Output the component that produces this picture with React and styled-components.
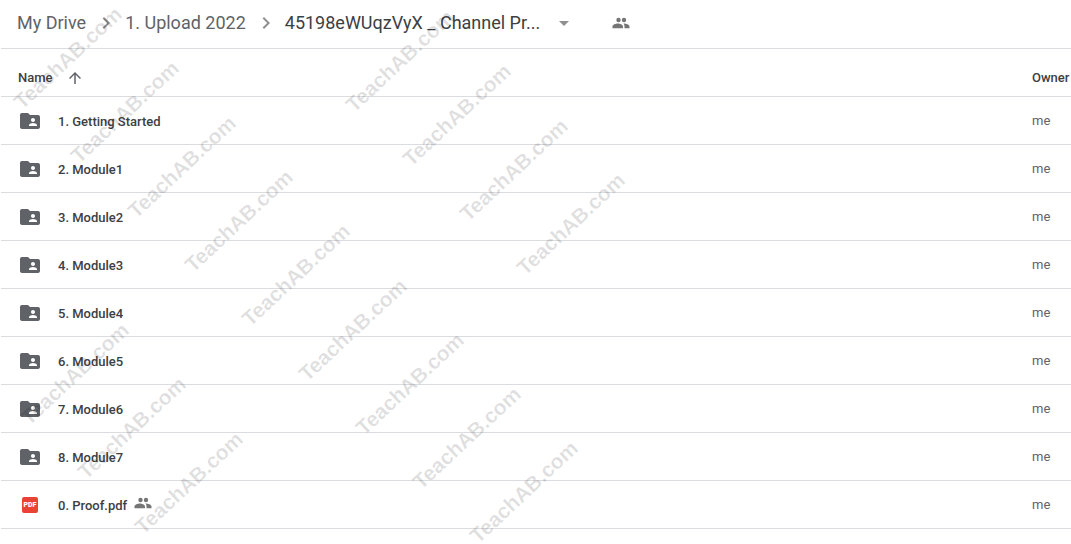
import React from 'react'
import styled, { createGlobalStyle } from 'styled-components'

const GlobalStyle = createGlobalStyle`
    body {
        margin: 0;
        background-color: white;
        font-family: Roboto, "Liberation Sans", sans-serif;
        color: #3c4043;
    }
`
const Container = styled.div`
    position: relative;
    min-height: 100vh;
    overflow: hidden;
`
const Content = styled.main`
    padding-left: 1px;
`
const Breadcrumbs = styled.nav`
    display: flex;
    align-items: center;
    height: 46px;
    padding: 0 16px 2px;
    border-bottom: 1px solid #dadce0;
    font-size: 18px;
    line-height: 24px;
    white-space: nowrap;
`
const Crumb = styled.a`
    color: #5f6368;
    text-decoration: none;
`
const CrumbButton = styled.button`
    display: flex;
    align-items: center;
    gap: 12px;
    padding: 0;
    border: 0;
    background: none;
    font: inherit;
    color: #3c4043;
`
const ShareButton = styled.button`
    display: flex;
    margin-left: 36px;
    padding: 0;
    border: 0;
    background: none;
`
const Icon = styled.svg`
    flex: none;
    display: block;
    width: ${({ $size }) => $size}px;
    height: ${({ $size }) => $size}px;
    fill: ${({ $color }) => $color || '#5f6368'};
`
const Separator = styled(Icon)`
    margin: 0 7px 0 8px;
`
const FileTable = styled.table`
    width: 100%;
    table-layout: fixed;
    border-collapse: separate;
    border-spacing: 0;
    font-size: 13px;
    line-height: 20px;
`
const HeadCell = styled.th`
    box-sizing: border-box;
    width: ${({ $width }) => $width || 'auto'};
    height: 48px;
    padding: 10px 0 0 ${({ $inset }) => $inset || '0'};
    border-bottom: 1px solid #dadce0;
    font-weight: 500;
    text-align: left;
`
const Cell = styled.td`
    box-sizing: border-box;
    height: 48px;
    padding: 0 0 0 ${({ $inset }) => $inset || '0'};
    border-bottom: 1px solid #dadce0;
    color: ${({ $muted }) => ($muted ? '#5f6368' : '#3c4043')};
    font-weight: ${({ $muted }) => ($muted ? 400 : 500)};
`
const SortButton = styled.button`
    display: flex;
    align-items: center;
    gap: 13px;
    padding: 0;
    border: 0;
    background: none;
    font: inherit;
    color: inherit;
`
const FileName = styled.div`
    display: flex;
    align-items: center;
    gap: 16px;
`
const Label = styled.span`
    display: flex;
    align-items: flex-start;
    gap: 7px;
    padding-top: 2px;
    line-height: 24px;
`
const PdfBadge = styled.span`
    flex: none;
    width: 16px;
    margin: 0 4px;
    border-radius: 2px;
    background-color: #ea4335;
    color: white;
    font-size: 7px;
    line-height: 16px;
    font-weight: 900;
    text-align: center;
`
const WatermarkLayer = styled.div`
    position: absolute;
    inset: 0;
    overflow: hidden;
    pointer-events: none;
`
const Watermark = styled.span`
    position: absolute;
    left: ${({ $x }) => $x}px;
    top: ${({ $y }) => $y}px;
    transform: translate(-50%, -50%) rotate(-43deg);
    font-family: "Liberation Sans", Arial, sans-serif;
    font-size: 21px;
    line-height: 20px;
    font-weight: 700;
    color: rgba(0, 0, 0, 0.12);
`

const PeopleIcon = () => (
    <Icon $size={18} viewBox="0 0 18 18" $color="#757575">
        <circle cx="6.5" cy="6" r="2.2" />
        <circle cx="12" cy="6" r="2.2" />
        <path d="M.5 14.2v-1.6c0-2 3.3-3 5.3-3s5.2 1 5.2 3v1.6z" />
        <path d="M11.5 9.6c2.5.1 6 1 6 3v1.6h-5v-1.6c0-1.2-.3-2.2-1-3z" />
    </Icon>
)

const FolderIcon = () => (
    <Icon $size={24} viewBox="0 0 24 24">
        <path d="M20 6h-8l-2-2H4c-1.1 0-1.99.9-1.99 2L2 18c0 1.1.9 2 2 2h16c1.1 0 2-.9 2-2V8c0-1.1-.9-2-2-2zm-5 3c1.1 0 2 .9 2 2s-.9 2-2 2-2-.9-2-2 .9-2 2-2zm4 8h-8v-1c0-1.33 2.67-2 4-2s4 .67 4 2v1z" />
    </Icon>
)

const PdfIcon = () => <PdfBadge>PDF</PdfBadge>

const Chevron = () => (
    <Separator $size={24} viewBox="0 0 24 24" $color="#909090">
        <path d="M10 6L8.59 7.41 13.17 12l-4.58 4.59L10 18l6-6z" />
    </Separator>
)

const files = [
    { name: '1. Getting Started' },
    { name: '2. Module1' },
    { name: '3. Module2' },
    { name: '4. Module3' },
    { name: '5. Module4' },
    { name: '6. Module5' },
    { name: '7. Module6' },
    { name: '8. Module7' },
    { name: '0. Proof.pdf', pdf: true, shared: true },
]

// each run goes down to the right from its first mark
const runs = [
    { x: 68, y: 58, count: 9 },
    { x: 400, y: 61, count: 4 },
    { x: 75, y: 374, count: 3 },
]
const marks = runs.flatMap(({ x, y, count }) =>
    Array.from({ length: count }, (_, i) => ({
        x: x + i * 57,
        y: y + Math.round(i * 54.3),
    }))
)

export default function App() {
    return (
        <Container>
            <GlobalStyle />
            <Content>
                <Breadcrumbs>
                    <Crumb href="#">My Drive</Crumb>
                    <Chevron />
                    <Crumb href="#">1. Upload 2022</Crumb>
                    <Chevron />
                    <CrumbButton>
                        45198eWUqzVyX _ Channel Pr...
                        <Icon $size={24} viewBox="0 0 24 24" $color="#909090">
                            <path d="M7 10l5 5 5-5z" />
                        </Icon>
                    </CrumbButton>
                    <ShareButton aria-label="Manage people">
                        <PeopleIcon />
                    </ShareButton>
                </Breadcrumbs>
                <FileTable>
                    <thead>
                        <tr>
                            <HeadCell $inset="17px">
                                <SortButton>
                                    Name
                                    <Icon $size={18} viewBox="0 0 24 24">
                                        <path d="M4 12l1.41 1.41L11 7.83V20h2V7.83l5.58 5.59L20 12l-8-8-8 8z" />
                                    </Icon>
                                </SortButton>
                            </HeadCell>
                            <HeadCell $width="39px">Owner</HeadCell>
                        </tr>
                    </thead>
                    <tbody>
                        {files.map((file) => (
                            <tr key={file.name}>
                                <Cell $inset="17px">
                                    <FileName>
                                        {file.pdf ? <PdfIcon /> : <FolderIcon />}
                                        <Label>
                                            {file.name}
                                            {file.shared && <PeopleIcon />}
                                        </Label>
                                    </FileName>
                                </Cell>
                                <Cell $muted>me</Cell>
                            </tr>
                        ))}
                    </tbody>
                </FileTable>
            </Content>
            <WatermarkLayer aria-hidden="true">
                {marks.map(({ x, y }) => (
                    <Watermark key={`${x}-${y}`} $x={x} $y={y}>TeachAB.com</Watermark>
                ))}
            </WatermarkLayer>
        </Container>
    )
}
